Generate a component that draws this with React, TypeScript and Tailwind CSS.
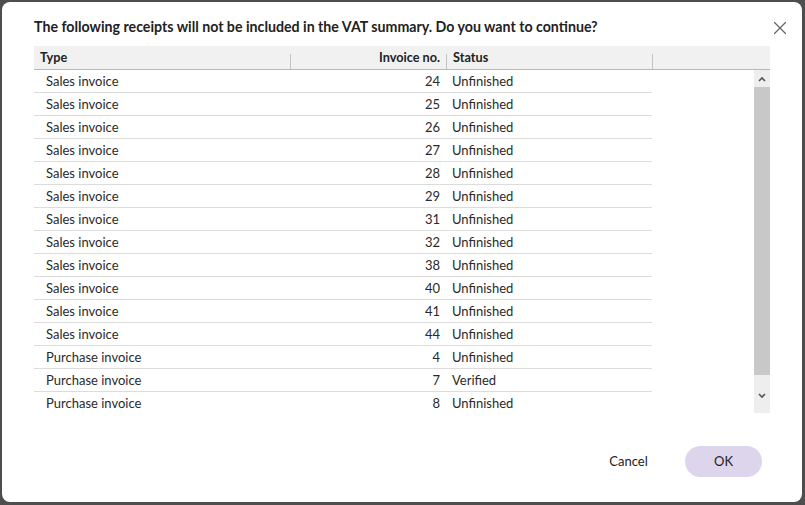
import { X } from "lucide-react";

type Receipt = {
  type: string;
  no: number;
  status: string;
};

const receipts: Receipt[] = [
  { type: "Sales invoice", no: 24, status: "Unfinished" },
  { type: "Sales invoice", no: 25, status: "Unfinished" },
  { type: "Sales invoice", no: 26, status: "Unfinished" },
  { type: "Sales invoice", no: 27, status: "Unfinished" },
  { type: "Sales invoice", no: 28, status: "Unfinished" },
  { type: "Sales invoice", no: 29, status: "Unfinished" },
  { type: "Sales invoice", no: 31, status: "Unfinished" },
  { type: "Sales invoice", no: 32, status: "Unfinished" },
  { type: "Sales invoice", no: 38, status: "Unfinished" },
  { type: "Sales invoice", no: 40, status: "Unfinished" },
  { type: "Sales invoice", no: 41, status: "Unfinished" },
  { type: "Sales invoice", no: 44, status: "Unfinished" },
  { type: "Purchase invoice", no: 4, status: "Unfinished" },
  { type: "Purchase invoice", no: 7, status: "Verified" },
  { type: "Purchase invoice", no: 8, status: "Unfinished" },
];

function Chevron({ up }: { up?: boolean }) {
  return (
    <svg width="8" height="6" viewBox="0 0 8 6" className={up ? "" : "rotate-180"}>
      <path d="M1 5 L4 2 L7 5" fill="none" stroke="#555" strokeWidth="1.6" />
    </svg>
  );
}

function HeaderSep() {
  return <div className="w-px h-[15px] self-end bg-[#c4c4c4]" />;
}

export default function App() {
  return (
    <div
      className="w-[805px] h-[505px] bg-[#4e4e4e] p-[2px]"
      style={{ fontFamily: 'Lato, "Liberation Sans", sans-serif' }}
    >
      <div className="relative w-[800px] h-[500px] bg-white rounded-[8px] flex flex-col px-[32px] pt-[15px]">
        <h1 className="text-[14.2px] leading-[20px] font-bold text-[#222]">
          The following receipts will not be included in the VAT summary. Do you want to continue?
        </h1>
        <button className="absolute left-[767px] top-[15px] w-[22px] h-[22px] flex items-center justify-center text-[#666]">
          <X size={24} strokeWidth={1.3} />
        </button>

        <div className="w-[736px] mt-[9px]">
          <div className="flex h-[24px] pt-[1px] bg-[#f1f1f1] border-b border-[#b8b8b8] text-[12.7px] font-bold text-[#222]">
            <div className="w-[256px] pl-[6px] flex items-center">Type</div>
            <HeaderSep />
            <div className="w-[155px] pr-[6px] flex items-center justify-end">Invoice no.</div>
            <HeaderSep />
            <div className="w-[205px] pl-[6px] flex items-center">Status</div>
            <HeaderSep />
            <div className="flex-1" />
          </div>

          <div className="flex h-[343px] overflow-hidden">
            <div className="w-[618px]">
              {receipts.map((r, i) => (
                <div
                  key={i}
                  className="flex h-[23px] pt-[1px] border-b border-[#dcdcdc] text-[13px] text-[#2a2a2a]"
                >
                  <div className="w-[256px] pl-[12px] flex items-center">{r.type}</div>
                  <div className="w-[156px] pr-[6px] flex items-center justify-end">{r.no}</div>
                  <div className="flex-1 pl-[6px] flex items-center">{r.status}</div>
                </div>
              ))}
            </div>
            <div className="flex-1" />
            <div className="w-[16px] h-full bg-[#eeeeee] flex flex-col items-center">
              <div className="h-[17px] flex items-center justify-center">
                <Chevron up />
              </div>
              <div className="w-full h-[288px] bg-[#c8c8c8]" />
              <div className="flex-1 flex items-center justify-center pt-[4px]">
                <Chevron />
              </div>
            </div>
          </div>
        </div>

        <div className="flex justify-end items-center gap-[18px] mt-[33px] pr-[8px]">
          <button className="w-[77px] h-[31px] rounded-full text-[13px] text-[#222]">Cancel</button>
          <button className="w-[77px] h-[31px] rounded-full bg-[#ddd5ec] text-[13px] text-[#222]">
            OK
          </button>
        </div>
      </div>
    </div>
  );
}
